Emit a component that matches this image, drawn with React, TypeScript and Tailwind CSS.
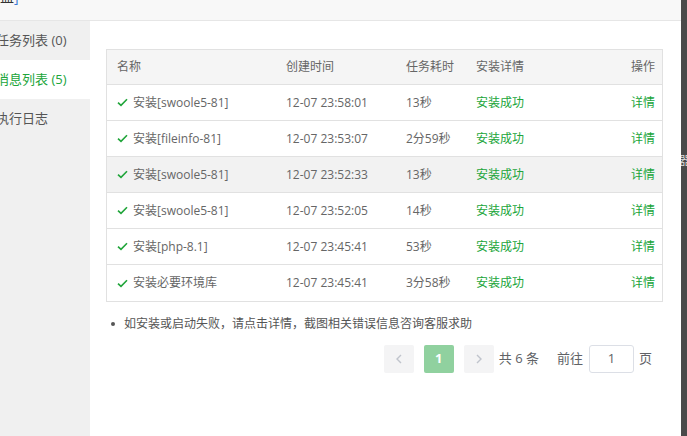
import React from "react";

const rows = [
  { name: "安装[swoole5-81]", time: "12-07 23:58:01", cost: "13秒", hover: false },
  { name: "安装[fileinfo-81]", time: "12-07 23:53:07", cost: "2分59秒", hover: false },
  { name: "安装[swoole5-81]", time: "12-07 23:52:33", cost: "13秒", hover: true },
  { name: "安装[swoole5-81]", time: "12-07 23:52:05", cost: "14秒", hover: false },
  { name: "安装[php-8.1]", time: "12-07 23:45:41", cost: "53秒", hover: false },
  { name: "安装必要环境库", time: "12-07 23:45:41", cost: "3分58秒", hover: false },
];

function Check() {
  return (
    <svg width="11" height="9" viewBox="0 0 11 9" className="mr-[5px] shrink-0">
      <path d="M1 4.6 L4 7.4 L10 1.2" fill="none" stroke="#20a53a" strokeWidth="1.6" />
    </svg>
  );
}

export default function App() {
  return (
    <div
      className="flex w-[687px] h-[436px] overflow-hidden bg-white text-[12px] text-[#666]"
      style={{ fontFamily: '"Open Sans", "Noto Sans CJK SC", sans-serif' }}
    >
      <div className="flex flex-col w-[681px] h-full">
        <div className="h-[21px] shrink-0 bg-[#f8f8f8] border-b border-[#e6e6e6] overflow-hidden relative">
          <span className="absolute left-[-14px] top-[-12px] text-[14px] text-[#333] leading-[18px]">
            磁盘<span className="text-[#3a7bd5]">]</span>
          </span>
        </div>
        <div className="flex flex-1 min-h-0">
          <div className="w-[90px] shrink-0 bg-[#f0f0f0] flex flex-col overflow-hidden">
            <div className="h-[39px] flex items-center text-[13px] text-[#555] whitespace-nowrap">
              <span className="-ml-[4px]">任务列表 (0)</span>
            </div>
            <div className="h-[39px] flex items-center bg-white text-[13px] text-[#20a53a] whitespace-nowrap">
              <span className="-ml-[4px]">消息列表 (5)</span>
            </div>
            <div className="h-[39px] flex items-center text-[13px] text-[#555] whitespace-nowrap">
              <span className="-ml-[4px]">执行日志</span>
            </div>
          </div>
          <div className="flex-1 pt-[28px] pl-[16px] pr-[18px]">
            <div className="border border-[#e1e1e1]">
              <div className="grid grid-cols-[169px_120px_70px_1fr_auto] items-center h-[35px] pl-[10px] pr-[7px] bg-[#f5f5f5] border-b border-[#e1e1e1] text-[#666]">
                <div>名称</div>
                <div>创建时间</div>
                <div>任务耗时</div>
                <div>安装详情</div>
                <div>操作</div>
              </div>
              {rows.map((r, i) => (
                <div
                  key={i}
                  className={`grid grid-cols-[169px_120px_70px_1fr_auto] items-center h-[36px] pl-[10px] pr-[7px] ${
                    i < rows.length - 1 ? "border-b border-[#e1e1e1]" : ""
                  } ${r.hover ? "bg-[#f2f2f2]" : "bg-white"}`}
                >
                  <div className="flex items-center whitespace-nowrap">
                    <Check />
                    <span>{r.name}</span>
                  </div>
                  <div className="whitespace-nowrap">{r.time}</div>
                  <div className="whitespace-nowrap">{r.cost}</div>
                  <div className="text-[#20a53a]">安装成功</div>
                  <div className="text-[#20a53a]">详情</div>
                </div>
              ))}
            </div>
            <div className="flex items-center mt-[13px] pl-[5px] text-[12px] text-[#555]">
              <span className="w-[4px] h-[4px] rounded-full bg-[#555] mr-[9px]" />
              <span>如安装或启动失败，请点击详情，截图相关错误信息咨询客服求助</span>
            </div>
            <div className="flex items-center justify-end mt-[12px] pr-[11px] text-[13px] text-[#606266]">
              <div className="w-[30px] h-[28px] rounded-[2px] bg-[#f4f4f5] flex items-center justify-center">
                <svg width="8" height="10" viewBox="0 0 8 10">
                  <path d="M6 1 L2 5 L6 9" fill="none" stroke="#c0c4cc" strokeWidth="1.4" />
                </svg>
              </div>
              <div className="w-[30px] h-[28px] ml-[10px] rounded-[2px] bg-[#90d19f] flex items-center justify-center text-white font-bold text-[13px]">
                1
              </div>
              <div className="w-[30px] h-[28px] ml-[10px] rounded-[2px] bg-[#f4f4f5] flex items-center justify-center">
                <svg width="8" height="10" viewBox="0 0 8 10">
                  <path d="M2 1 L6 5 L2 9" fill="none" stroke="#c0c4cc" strokeWidth="1.4" />
                </svg>
              </div>
              <span className="ml-[5px] whitespace-nowrap">共 6 条</span>
              <span className="ml-[18px] whitespace-nowrap">前往</span>
              <div className="ml-[6px] w-[45px] h-[28px] border border-[#dcdfe6] rounded-[3px] flex items-center justify-center text-[#606266]">
                1
              </div>
              <span className="ml-[5px]">页</span>
            </div>
          </div>
        </div>
      </div>
      <div className="w-[6px] h-full bg-[#4a4a4a] relative overflow-hidden">
        <span className="absolute top-[152px] left-[-2px] text-[12px] text-[#ddd]">器</span>
      </div>
    </div>
  );
}
